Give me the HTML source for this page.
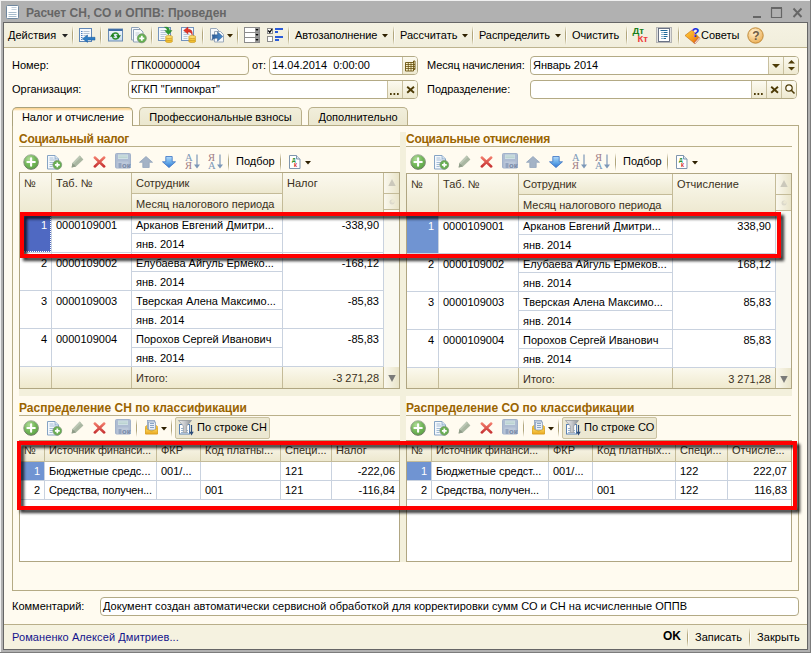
<!DOCTYPE html>
<html><head><meta charset="utf-8"><style>
*{box-sizing:border-box;margin:0;padding:0}
html,body{width:811px;height:653px;overflow:hidden}
body{font-family:"Liberation Sans",sans-serif;font-size:11px;color:#000;background:#b1b1b1;position:relative}
.abs{position:absolute}
.t{position:absolute;white-space:nowrap;line-height:13px;height:13px}
#win{position:absolute;left:4px;top:23px;width:803px;height:626px;background:#fffbf0}
#frameL{position:absolute;left:3px;top:22px;width:1px;height:628px;background:#666}
#frameR{position:absolute;left:807px;top:22px;width:1px;height:628px;background:#666}
#frameT{position:absolute;left:3px;top:22px;width:805px;height:1px;background:#666}
#frameB{position:absolute;left:3px;top:649px;width:805px;height:1px;background:#666}
#title{position:absolute;left:26px;top:6px;font-size:12px;font-weight:bold;color:#666;line-height:15px;white-space:nowrap}
#tb{position:absolute;left:4px;top:23px;width:803px;height:25px;background:linear-gradient(#f5f2e2,#f1eedc);border-bottom:1px solid #bdb38e}
.sep{position:absolute;width:2px;background:linear-gradient(rgba(178,166,124,0),rgba(178,166,124,1) 35%,rgba(178,166,124,1) 65%,rgba(178,166,124,0)) left/1px 100% no-repeat,linear-gradient(rgba(255,255,255,0),rgba(255,255,255,.9) 35%,rgba(255,255,255,.9) 65%,rgba(255,255,255,0)) right/1px 100% no-repeat}
.fld{position:absolute;height:19px;border:1px solid #b3aa85;border-radius:4px;background:#fff;overflow:hidden}
.fld .tx{position:absolute;left:2px;top:2px;line-height:13px;white-space:nowrap}
.btn{position:absolute;top:0;height:17px;width:15px;border-left:1px solid #c9c09f;background:linear-gradient(#fcfaf0,#eee9d0)}
.tab{position:absolute;top:107px;height:18px;border:1px solid #b9af8a;border-bottom:none;border-radius:5px 5px 0 0;background:linear-gradient(#f1eedb,#ebe7cf);text-align:center;line-height:18px;white-space:nowrap}
.tab.act{background:linear-gradient(#fbd596 0,#fbd596 1px,#fde9c4 2px,#fffbf0 3px);height:19px;line-height:18px;border-color:#aaa27c}
#panel{position:absolute;left:12px;top:125px;width:787px;height:466px;border:1px solid #b5ab85;background:#fffbf0}
.sect{position:absolute;font-size:12px;font-weight:bold;color:#9a6400;line-height:15px;white-space:nowrap}
.sline{position:absolute;height:1px;background:#bab08a}
.grid{position:absolute;border:1px solid #b0a682;background:#fff;overflow:hidden}
.hd{position:absolute;background:linear-gradient(#fbf9ee,#ede8cf);border-right:1px solid #c4bb98;border-bottom:1px solid #c4bb98;color:#3a3020}
.hd span,.c span{position:absolute;left:4px;top:3px;line-height:13px;white-space:nowrap}
.c{position:absolute;border-right:1px solid #c9d2df;border-bottom:1px solid #c9d2df;background:#fff;overflow:hidden}
.c.r span{left:auto;right:4px}
.ft{position:absolute;background:linear-gradient(#fbf9ee,#efe9cd);border-right:1px solid #c4bb98;color:#3a3020}
.g1 .hd span,.g1 .c span{top:4px}
.ft span{position:absolute;top:5px;line-height:13px;white-space:nowrap}
.sb{position:absolute;background:#faf9f2;}
.red{position:absolute;border:4px solid #ff0000;filter:drop-shadow(3px 3px 1.5px rgba(0,0,0,.8))}
</style></head><body>
<!-- title bar -->
<div class="abs" style="left:0;top:0;width:811px;height:1px;background:#f0f0f0"></div>
<div class="abs" style="left:0;top:0;width:1px;height:653px;background:#f0f0f0"></div>
<svg class="abs" style="left:6px;top:5px" width="13" height="14" viewBox="0 0 13 14"><rect x=".5" y=".5" width="12" height="13" rx="1" fill="#fff" stroke="#7088a0"/><path d="M5.500 2.500h5M5.500 4.500h5" stroke="#c4d0dc" stroke-width="1"/><path d="M2.500 7.500h8M2.500 9.500h8M2.500 11.500h8" stroke="#a8bccc" stroke-width="1"/></svg>
<div id="title">Расчет СН, СО и ОППВ: Проведен</div>
<svg class="abs" style="left:750px;top:4px" width="56" height="16" viewBox="0 0 56 16"><path d="M3 13h8" stroke="#666" stroke-width="2"/><path d="M21.500 4v9.500h10v-9.500" fill="none" stroke="#666" stroke-width="1.200"/><path d="M21 4h11" stroke="#666" stroke-width="2"/><path d="M43.500 4.500l8 8.500M51.500 4.500l-8 8.500" stroke="#666" stroke-width="1.900"/></svg>
<div class="abs" style="left:810px;top:0;width:1px;height:653px;background:#7c7c7c"></div><div class="abs" style="left:0;top:652px;width:811px;height:1px;background:#7c7c7c"></div>
<div id="win"></div>
<div id="frameL"></div><div id="frameR"></div><div id="frameT"></div><div id="frameB"></div>
<div id="tb"></div>

<!-- toolbar items -->
<div class="t" style="left:8px;top:29px">Действия</div>
<svg class="abs" style="left:62px;top:34px" width="6" height="4"><path d="M0 0h6l-3 3.5z" fill="#222"/></svg>
<div class="sep" style="left:72px;top:26px;height:19px"></div>
<!-- icon1 -->
<svg class="abs" style="left:79px;top:27px" width="17" height="17" viewBox="0 0 17 17"><rect x=".5" y="1.500" width="12" height="13" fill="#f6f9fc" stroke="#5f86b6"/><path d="M2 4.500h1.500M2 6.500h1.500M2 8.500h1.500M2 10.500h1.500M2 12.500h1.500" stroke="#4a7cc0"/><path d="M4.500 4.500h6M4.500 6.500h6M4.500 8.500h4M4.500 12.500h6" stroke="#b4c2d2"/><path d="M16 10.300h-7.500v-2.300l-5 3.700 5 3.700v-2.300h7.500z" fill="#2d7cc4" stroke="#1d5c9a" stroke-width=".5"/></svg>
<div class="sep" style="left:100px;top:26px;height:19px"></div>
<!-- icon2 -->
<svg class="abs" style="left:108px;top:28px" width="15" height="14" viewBox="0 0 15 14"><defs><linearGradient id="gw" x1="0" y1="0" x2="0" y2="1"><stop offset="0" stop-color="#f4f8fc"/><stop offset="1" stop-color="#c8dcf0"/></linearGradient></defs><rect x=".5" y="1" width="14" height="12" fill="url(#gw)" stroke="#6a8cb4"/><rect x=".5" y="1" width="14" height="2" fill="#3f6ea6"/><circle cx="7.500" cy="8" r="3" fill="none" stroke="#2f8f2f" stroke-width="1.300"/><path d="M2 8.800h5l-2.500-3.600z" fill="#1f7f1f"/><path d="M8 7.200h5l-2.500 3.600z" fill="#1f7f1f"/></svg>
<!-- icon3 -->
<svg class="abs" style="left:130px;top:26px" width="18" height="18" viewBox="0 0 18 18"><path d="M1.500 1.500h7l2.500 2.500v10h-9.500z" fill="#f4f7fa" stroke="#8fa2b8"/><path d="M3.500 3.500h7l2.500 2.500v10h-9.500z" fill="#f8fafc" stroke="#8fa2b8"/><path d="M5.500 7h4M5.500 9h3" stroke="#c0ccd8"/><circle cx="11.800" cy="12.300" r="4.500" fill="#62b04e" stroke="#7c9474" stroke-width=".8"/><path d="M11.800 9.800v5M9.300 12.300h5" stroke="#fff" stroke-width="1.800"/></svg>
<div class="sep" style="left:151px;top:26px;height:19px"></div>
<!-- icon4 -->
<svg class="abs" style="left:157px;top:26px" width="18" height="18" viewBox="0 0 18 18"><rect x="1.500" y="1.500" width="12" height="13" fill="#f4f8fc" stroke="#7393bd"/><path d="M3.500 4.500h5M3.500 6.500h6M3.500 8.500h6M3.500 10.500h4M3.500 12.500h4" stroke="#b7c6d8"/><path d="M7.500 1.200c3-.6 5 .5 5 3.300h2.500l-3.600 4.300-3.600-4.300h2.400c0-1.500-1-2.400-2.700-3.300z" fill="#2f9a32" stroke="#1f7a22" stroke-width=".4"/><ellipse cx="12" cy="15" rx="3.600" ry="1.600" fill="#f2c030" stroke="#c4921c" stroke-width=".6"/><ellipse cx="12" cy="13" rx="3.600" ry="1.600" fill="#f6cc44" stroke="#c4921c" stroke-width=".6"/><ellipse cx="12" cy="11" rx="3.600" ry="1.600" fill="#fbdc68" stroke="#c4921c" stroke-width=".6"/></svg>
<!-- icon5 -->
<svg class="abs" style="left:180px;top:26px" width="18" height="18" viewBox="0 0 18 18"><rect x="1.500" y="1.500" width="12" height="13" fill="#f4f8fc" stroke="#7393bd"/><path d="M3.500 6.500h3M3.500 8.500h6M3.500 10.500h4M3.500 12.500h4M9 4.500h3" stroke="#b7c6d8"/><path d="M3.600 4.500l4.400-3.500v2.200c3 0 4.800 1.800 4.200 6-.7-2.400-1.800-3.300-4.200-3.300v2.200z" fill="#e23428" stroke="#b01c14" stroke-width=".4"/><ellipse cx="12.2" cy="15" rx="3.600" ry="1.600" fill="#f2c030" stroke="#c4921c" stroke-width=".6"/><ellipse cx="12.2" cy="13" rx="3.600" ry="1.600" fill="#f6cc44" stroke="#c4921c" stroke-width=".6"/><ellipse cx="12.2" cy="11" rx="3.600" ry="1.600" fill="#fbdc68" stroke="#c4921c" stroke-width=".6"/></svg>
<div class="sep" style="left:202px;top:26px;height:19px"></div>
<!-- icon6 -->
<svg class="abs" style="left:209px;top:27px" width="17" height="17" viewBox="0 0 17 17"><defs><linearGradient id="g6" x1="0" y1="0" x2="1" y2="0"><stop offset="0" stop-color="#2c5a96"/><stop offset="1" stop-color="#4a8ed0"/></linearGradient></defs><path d="M1.500 1.500h6l2.500 2.500v9h-8.500z" fill="#f6f8fa" stroke="#9aa9ba"/><path d="M5.500 4.500h6l3 3v7.500h-9z" fill="#f6f8fa" stroke="#9aa9ba"/><path d="M3 7.800h5.500v-3l5.300 4.700-5.300 4.700v-3c-2.500 0-4 .3-5.500 1.600 .6-2 .6-3.500 0-5z" fill="url(#g6)" stroke="#244c82" stroke-width=".4"/></svg>
<svg class="abs" style="left:227px;top:34px" width="6" height="4"><path d="M0 0h6l-3 3.500z" fill="#3a2800"/></svg>
<div class="sep" style="left:237px;top:26px;height:19px"></div>
<!-- icon7 -->
<svg class="abs" style="left:244px;top:27px" width="16" height="16" viewBox="0 0 16 16"><rect x=".5" y="0.500" width="15" height="5" fill="#fff" stroke="#8c8c8c"/><rect x="11" y="1" width="4" height="4" fill="#9a9a9a"/><path d="M11.500 2h3l-1.500 2z" fill="#000"/><rect x=".5" y="5.500" width="15" height="5" fill="#fff" stroke="#8c8c8c"/><rect x="11" y="6" width="4" height="4" fill="#9a9a9a"/><path d="M11.500 7h3l-1.500 2z" fill="#000"/><rect x=".5" y="10.500" width="15" height="5" fill="#fff" stroke="#8c8c8c"/><rect x="11" y="11" width="4" height="4" fill="#9a9a9a"/><path d="M11.500 12h3l-1.500 2z" fill="#000"/></svg>
<!-- icon8 -->
<svg class="abs" style="left:267px;top:28px" width="17" height="14" viewBox="0 0 17 14"><rect x=".5" y=".5" width="5" height="5" fill="#fff" stroke="#8c8c8c"/><path d="M1.300 2.500l1.500 1.800 2.200-3.300" stroke="#000" stroke-width="1.300" fill="none"/><rect x=".5" y="8.500" width="5" height="5" fill="#fff" stroke="#8c8c8c"/><path d="M8 1h8M8 4h3M8 9h8M8 12h4" stroke="#2a5ad8" stroke-width="1.800"/></svg>
<div class="sep" style="left:288px;top:26px;height:19px"></div>
<div class="t" style="left:295px;top:29px;letter-spacing:-.1px">Автозаполнение</div>
<svg class="abs" style="left:382px;top:34px" width="6" height="4"><path d="M0 0h6l-3 3.500z" fill="#2e2000"/></svg>
<div class="sep" style="left:393px;top:26px;height:19px"></div>
<div class="t" style="left:400px;top:29px">Рассчитать</div>
<svg class="abs" style="left:462px;top:34px" width="6" height="4"><path d="M0 0h6l-3 3.500z" fill="#2e2000"/></svg>
<div class="sep" style="left:472px;top:26px;height:19px"></div>
<div class="t" style="left:479px;top:29px;letter-spacing:-.1px">Распределить</div>
<svg class="abs" style="left:555px;top:34px" width="6" height="4"><path d="M0 0h6l-3 3.500z" fill="#2e2000"/></svg>
<div class="sep" style="left:565px;top:26px;height:19px"></div>
<div class="t" style="left:572px;top:29px;letter-spacing:-.1px">Очистить</div>
<div class="sep" style="left:626px;top:26px;height:19px"></div>
<!-- DtKt -->
<svg class="abs" style="left:631px;top:26px" width="19" height="18" viewBox="0 0 19 18"><text x="1.500" y="8" font-family="Liberation Sans" font-weight="bold" font-size="9" fill="#1a7e1a" textLength="11.500" lengthAdjust="spacingAndGlyphs">Дт</text><text x="6.500" y="15.700" font-family="Liberation Sans" font-weight="bold" font-size="9" fill="#ee3a3a" textLength="10.500" lengthAdjust="spacingAndGlyphs">Кт</text></svg>
<!-- list icon -->
<svg class="abs" style="left:656px;top:27px" width="16" height="16" viewBox="0 0 16 16"><rect x=".5" y=".5" width="15" height="15" fill="#e2e2e2" stroke="#b4b4b4"/><rect x="2.500" y="1.500" width="11" height="13" fill="#fff" stroke="#5c667a" stroke-width=".9"/><path d="M4.500 3.500h7M7.500 5.500h4M7.500 7.500h4M7.500 9.500h4M7.500 11.500h2.500M4.500 13h0" stroke="#1f6a9a"/><path d="M5.500 5.500h1M5.500 7.500h1M5.500 9.500h1M5.500 11.500h1" stroke="#1f6a9a"/></svg>
<div class="sep" style="left:678px;top:26px;height:19px"></div>
<!-- sovety icon -->
<svg class="abs" style="left:684px;top:25px" width="18" height="20" viewBox="0 0 18 20"><defs><linearGradient id="gb" x1="0" y1="0" x2="1" y2="1"><stop offset="0" stop-color="#ffd23c"/><stop offset=".6" stop-color="#f59a1c"/><stop offset="1" stop-color="#e05a14"/></linearGradient></defs><path d="M1 10.500l7-5.500 7 7.500-5 5.500z" fill="url(#gb)" stroke="#c06a10" stroke-width=".6"/><path d="M10 18l5-5.500 .8 1-5 5.500z" fill="#fff" stroke="#b8421c" stroke-width=".6"/><text x="7.500" y="11.500" font-family="Liberation Sans" font-weight="bold" font-size="13" fill="#1a2ee0">?</text></svg>
<div class="t" style="left:701px;top:29px">Советы</div>
<!-- help -->
<svg class="abs" style="left:747px;top:27px" width="17" height="17" viewBox="0 0 17 17"><defs><radialGradient id="hg" cx=".4" cy=".3" r=".8"><stop offset="0" stop-color="#fff2d2"/><stop offset="1" stop-color="#eaa848"/></radialGradient></defs><circle cx="8.500" cy="8.500" r="7.700" fill="url(#hg)" stroke="#c08a3a"/><text x="5.300" y="13" font-family="Liberation Sans" font-weight="bold" font-size="12" fill="#6e5c46">?</text></svg>

<!-- fields row 1 -->
<div class="t" style="left:12px;top:59px">Номер:</div>
<div class="fld" style="left:128px;top:56px;width:121px;background:#fffbf0"><div class="tx">ГПК00000004</div></div>
<div class="t" style="left:252px;top:59px">от:</div>
<div class="fld" style="left:269px;top:56px;width:149px"><div class="tx">14.04.2014&nbsp; 0:00:00</div>
 <div class="btn" style="left:132px"><svg class="abs" style="left:2px;top:3px" width="11" height="12" viewBox="0 0 11 12"><path d="M.5 2.500h8v-1.500h1.500v8.500h-1.500v1.500h-8z" fill="#fbf3cc" stroke="#6a5210" stroke-width=".9"/><path d="M.5 4.500h9.500M.5 6.500h9.500M.5 8.500h9.500M3.300 2.500v8.500M6 2.500v8.500M8.500 1.500v9" stroke="#6a5210" stroke-width=".8"/></svg></div></div>
<div class="t" style="left:427px;top:59px;letter-spacing:-.1px">Месяц начисления:</div>
<div class="fld" style="left:530px;top:56px;width:269px"><div class="tx">Январь 2014</div>
 <div class="btn" style="left:237px"><svg class="abs" style="left:3px;top:7px" width="8" height="4"><path d="M0 0h8l-4 4z" fill="#4e3c08"/></svg></div>
 <div class="btn" style="left:252px"><svg class="abs" style="left:4px;top:3px" width="7" height="11"><path d="M0 3.500h7l-3.500-3.500z" fill="#4e3c08"/><path d="M0 7h7l-3.500 3.500z" fill="#4e3c08"/></svg></div></div>
<!-- fields row 2 -->
<div class="t" style="left:12px;top:83px">Организация:</div>
<div class="fld" style="left:128px;top:80px;width:290px"><div class="tx">КГКП "Гиппократ"</div>
 <div class="btn" style="left:258px"><svg class="abs" style="left:2px;top:12px" width="10" height="2"><rect x="0" y="0" width="1.700" height="2" fill="#4e3c08"/><rect x="3.500" y="0" width="1.700" height="2" fill="#4e3c08"/><rect x="7" y="0" width="1.700" height="2" fill="#4e3c08"/></svg></div>
 <div class="btn" style="left:273px"><svg class="abs" style="left:3px;top:4px" width="9" height="9"><path d="M1.200 1.700l6.800 6M8 1.700l-6.800 6" stroke="#4e3c08" stroke-width="1.900"/></svg></div></div>
<div class="t" style="left:427px;top:83px">Подразделение:</div>
<div class="fld" style="left:530px;top:80px;width:267px"><div class="tx"></div>
 <div class="btn" style="left:220px"><svg class="abs" style="left:2px;top:12px" width="10" height="2"><rect x="0" y="0" width="1.700" height="2" fill="#4e3c08"/><rect x="3.500" y="0" width="1.700" height="2" fill="#4e3c08"/><rect x="7" y="0" width="1.700" height="2" fill="#4e3c08"/></svg></div>
 <div class="btn" style="left:235px"><svg class="abs" style="left:3px;top:4px" width="9" height="9"><path d="M1.200 1.700l6.800 6M8 1.700l-6.800 6" stroke="#4e3c08" stroke-width="1.900"/></svg></div>
 <div class="btn" style="left:250px"><svg class="abs" style="left:2px;top:2px" width="12" height="12"><circle cx="5" cy="5" r="3.200" fill="#fffdf2" stroke="#4e3c08" stroke-width="1.200"/><path d="M7.300 7.300l3.200 3.200" stroke="#4e3c08" stroke-width="1.600"/></svg></div></div>
<!-- tabs -->
<div id="panel"></div>
<div class="tab act" style="left:12px;width:121px;text-indent:1px">Налог и отчисление</div>
<div class="tab" style="left:139px;width:163px">Профессиональные взносы</div>
<div class="tab" style="left:308px;width:100px">Дополнительно</div>

<!--GEN-->
<div class="abs" style="left:400px;top:132px;width:6px;height:430px;background:#f3f0dc"></div>
<div class="abs" style="left:19px;top:389px;width:773px;height:7px;background:#f3f0dc"></div>
<div class="sect" style="left:19px;top:132px;letter-spacing:-.27px">Социальный налог</div>
<div class="sline" style="left:19px;top:146px;width:381px"></div>
<div class="sect" style="left:406px;top:132px;letter-spacing:-.27px">Социальные отчисления</div>
<div class="sline" style="left:406px;top:146px;width:386px"></div>
<svg class="abs" style="left:23px;top:154px" width="16" height="16" viewBox="0 0 16 16"><defs><radialGradient id="ga" cx=".38" cy=".3" r=".75"><stop offset="0" stop-color="#b2dd9a"/><stop offset=".55" stop-color="#74b75a"/><stop offset="1" stop-color="#5aa242"/></radialGradient><linearGradient id="gs" x1="0" y1="0" x2="0" y2="1"><stop offset="0" stop-color="#aab4a2"/><stop offset="1" stop-color="#66745e"/></linearGradient></defs><circle cx="8.100" cy="8" r="7.300" fill="url(#ga)" stroke="url(#gs)" stroke-width="1"/><path d="M8.100 4.300v7.400M4.400 8h7.400" stroke="#fff" stroke-width="2.100" stroke-linecap="round"/></svg>
<svg class="abs" style="left:47px;top:155px" width="16" height="15" viewBox="0 0 16 15"><path d="M.5 .5h7.500l3.500 3.500v10h-11z" fill="#f4f8fc" stroke="#86a4c4"/><path d="M8 .5v3.500h3.500" fill="#d4e2f0" stroke="#86a4c4" stroke-width=".8"/><path d="M2.500 3h4M2.500 5h6M2.500 7.500h5M2.500 9.500h4M2.500 11.500h3" stroke="#a4bcd6"/><circle cx="10.300" cy="9.800" r="4.400" fill="#66ae50" stroke="#7e9878" stroke-width=".8"/><path d="M10.300 7.400v4.800M7.900 9.800h4.800" stroke="#fff" stroke-width="1.700"/></svg>
<svg class="abs" style="left:71px;top:155px" width="13" height="13" viewBox="0 0 13 13"><path d="M.6 12.400l.9-4.400 7.300-7.400 3.600 3.800-7.400 7.200z" fill="#aab7a2"/><path d="M.6 12.400l.9-4.400 3.500 3.600z" fill="#8f9c88"/><path d="M1.500 8l7.300-7.400 1.200 1.300-7.300 7.300z" fill="#bcc8b5"/></svg>
<svg class="abs" style="left:93px;top:156px" width="13" height="12" viewBox="0 0 13 12"><defs><linearGradient id="gx" x1="0" y1="0" x2="0" y2="1"><stop offset="0" stop-color="#f07868"/><stop offset="1" stop-color="#c83434"/></linearGradient></defs><path d="M1.800 1.500l9.400 9M11.200 1.500l-9.400 9" stroke="url(#gx)" stroke-width="2.500" stroke-linecap="round"/></svg>
<svg class="abs" style="left:115px;top:153px" width="16" height="16" viewBox="0 0 16 16"><rect x=".5" y=".5" width="15" height="14.500" rx="1" fill="#aebcd2" stroke="#a2b2ca"/><rect x="3" y="1.500" width="10" height="4.500" fill="#cfe0e4"/><path d="M3.500 3h9M3.500 4.500h9" stroke="#b8d0cc" stroke-width=".8"/><rect x="2.500" y="8.500" width="11" height="6.500" fill="#bcc8da"/><rect x="3.500" y="10" width="3" height="5" fill="#93a4c0"/><text x="7" y="15" font-family="Liberation Sans" font-weight="bold" font-size="7" fill="#7888a6" textLength="8.500" lengthAdjust="spacingAndGlyphs">ок</text></svg>
<svg class="abs" style="left:139px;top:156px" width="14" height="12" viewBox="0 0 14 12"><path d="M7 .5l6.500 5.800h-3.300v5.200h-6.400v-5.200h-3.300z" fill="#a4b3c6" stroke="#94a6bc" stroke-width=".8"/></svg>
<svg class="abs" style="left:162px;top:156px" width="14" height="12" viewBox="0 0 14 12"><defs><linearGradient id="gd" x1="0" y1="0" x2="0" y2="1"><stop offset="0" stop-color="#b4dafa"/><stop offset=".5" stop-color="#6aaeea"/><stop offset="1" stop-color="#2f74d0"/></linearGradient></defs><path d="M7 11.600l6.500-5.800h-3.300v-5.300h-6.400v5.300h-3.300z" fill="url(#gd)" stroke="#3a72c4" stroke-width=".8"/></svg>
<svg class="abs" style="left:185px;top:153px" width="16" height="17" viewBox="0 0 16 17"><text x="0" y="8" font-family="Liberation Serif" font-size="10.500" fill="#7c98b8">А</text><text x="0" y="16.300" font-family="Liberation Serif" font-size="10.500" fill="#a07c84">Я</text><path d="M12 1.500v12.500" stroke="#7c98b8" stroke-width="1.200" fill="none"/><path d="M9 11.500h6l-3 4z" fill="#7c98b8"/></svg>
<svg class="abs" style="left:208px;top:153px" width="16" height="17" viewBox="0 0 16 17"><text x="0" y="8" font-family="Liberation Serif" font-size="10.500" fill="#a07c84">Я</text><text x="0" y="16.300" font-family="Liberation Serif" font-size="10.500" fill="#7c98b8">А</text><path d="M12 1.500v12.500" stroke="#7c98b8" stroke-width="1.200" fill="none"/><path d="M9 11.500h6l-3 4z" fill="#7c98b8"/></svg>
<div class="sep" style="left:228px;top:153px;height:18px"></div>
<div class="t" style="left:236px;top:155px">Подбор</div>
<div class="sep" style="left:280px;top:153px;height:18px"></div>
<svg class="abs" style="left:289px;top:155px" width="12" height="14" viewBox="0 0 12 14"><path d="M.5 .5h7l3.500 3.500v9.500h-10.500z" fill="#fff" stroke="#7f95ad"/><path d="M7.500 .5v3.500h3.500" fill="#dfe7f0" stroke="#7f95ad"/><text x="3" y="6.500" font-family="Liberation Sans" font-weight="bold" font-size="5" fill="#1a8a1a">Д</text><text x="5" y="11.500" font-family="Liberation Sans" font-weight="bold" font-size="5" fill="#d02020">К</text></svg>
<svg class="abs" style="left:305px;top:161px" width="6" height="4"><path d="M0 0h6l-3 3.500z" fill="#2e2000"/></svg>
<svg class="abs" style="left:410px;top:154px" width="16" height="16" viewBox="0 0 16 16"><defs><radialGradient id="ga" cx=".38" cy=".3" r=".75"><stop offset="0" stop-color="#b2dd9a"/><stop offset=".55" stop-color="#74b75a"/><stop offset="1" stop-color="#5aa242"/></radialGradient><linearGradient id="gs" x1="0" y1="0" x2="0" y2="1"><stop offset="0" stop-color="#aab4a2"/><stop offset="1" stop-color="#66745e"/></linearGradient></defs><circle cx="8.100" cy="8" r="7.300" fill="url(#ga)" stroke="url(#gs)" stroke-width="1"/><path d="M8.100 4.300v7.400M4.400 8h7.400" stroke="#fff" stroke-width="2.100" stroke-linecap="round"/></svg>
<svg class="abs" style="left:434px;top:155px" width="16" height="15" viewBox="0 0 16 15"><path d="M.5 .5h7.500l3.500 3.500v10h-11z" fill="#f4f8fc" stroke="#86a4c4"/><path d="M8 .5v3.500h3.500" fill="#d4e2f0" stroke="#86a4c4" stroke-width=".8"/><path d="M2.500 3h4M2.500 5h6M2.500 7.500h5M2.500 9.500h4M2.500 11.500h3" stroke="#a4bcd6"/><circle cx="10.300" cy="9.800" r="4.400" fill="#66ae50" stroke="#7e9878" stroke-width=".8"/><path d="M10.300 7.400v4.800M7.900 9.800h4.800" stroke="#fff" stroke-width="1.700"/></svg>
<svg class="abs" style="left:458px;top:155px" width="13" height="13" viewBox="0 0 13 13"><path d="M.6 12.400l.9-4.400 7.300-7.400 3.600 3.800-7.400 7.200z" fill="#aab7a2"/><path d="M.6 12.400l.9-4.400 3.500 3.600z" fill="#8f9c88"/><path d="M1.500 8l7.300-7.400 1.200 1.300-7.300 7.300z" fill="#bcc8b5"/></svg>
<svg class="abs" style="left:480px;top:156px" width="13" height="12" viewBox="0 0 13 12"><defs><linearGradient id="gx" x1="0" y1="0" x2="0" y2="1"><stop offset="0" stop-color="#f07868"/><stop offset="1" stop-color="#c83434"/></linearGradient></defs><path d="M1.800 1.500l9.400 9M11.200 1.500l-9.400 9" stroke="url(#gx)" stroke-width="2.500" stroke-linecap="round"/></svg>
<svg class="abs" style="left:502px;top:153px" width="16" height="16" viewBox="0 0 16 16"><rect x=".5" y=".5" width="15" height="14.500" rx="1" fill="#aebcd2" stroke="#a2b2ca"/><rect x="3" y="1.500" width="10" height="4.500" fill="#cfe0e4"/><path d="M3.500 3h9M3.500 4.500h9" stroke="#b8d0cc" stroke-width=".8"/><rect x="2.500" y="8.500" width="11" height="6.500" fill="#bcc8da"/><rect x="3.500" y="10" width="3" height="5" fill="#93a4c0"/><text x="7" y="15" font-family="Liberation Sans" font-weight="bold" font-size="7" fill="#7888a6" textLength="8.500" lengthAdjust="spacingAndGlyphs">ок</text></svg>
<svg class="abs" style="left:526px;top:156px" width="14" height="12" viewBox="0 0 14 12"><path d="M7 .5l6.500 5.800h-3.300v5.200h-6.400v-5.200h-3.300z" fill="#a4b3c6" stroke="#94a6bc" stroke-width=".8"/></svg>
<svg class="abs" style="left:549px;top:156px" width="14" height="12" viewBox="0 0 14 12"><defs><linearGradient id="gd" x1="0" y1="0" x2="0" y2="1"><stop offset="0" stop-color="#b4dafa"/><stop offset=".5" stop-color="#6aaeea"/><stop offset="1" stop-color="#2f74d0"/></linearGradient></defs><path d="M7 11.600l6.500-5.800h-3.300v-5.300h-6.400v5.300h-3.300z" fill="url(#gd)" stroke="#3a72c4" stroke-width=".8"/></svg>
<svg class="abs" style="left:572px;top:153px" width="16" height="17" viewBox="0 0 16 17"><text x="0" y="8" font-family="Liberation Serif" font-size="10.500" fill="#7c98b8">А</text><text x="0" y="16.300" font-family="Liberation Serif" font-size="10.500" fill="#a07c84">Я</text><path d="M12 1.500v12.500" stroke="#7c98b8" stroke-width="1.200" fill="none"/><path d="M9 11.500h6l-3 4z" fill="#7c98b8"/></svg>
<svg class="abs" style="left:595px;top:153px" width="16" height="17" viewBox="0 0 16 17"><text x="0" y="8" font-family="Liberation Serif" font-size="10.500" fill="#a07c84">Я</text><text x="0" y="16.300" font-family="Liberation Serif" font-size="10.500" fill="#7c98b8">А</text><path d="M12 1.500v12.500" stroke="#7c98b8" stroke-width="1.200" fill="none"/><path d="M9 11.500h6l-3 4z" fill="#7c98b8"/></svg>
<div class="sep" style="left:615px;top:153px;height:18px"></div>
<div class="t" style="left:623px;top:155px">Подбор</div>
<div class="sep" style="left:667px;top:153px;height:18px"></div>
<svg class="abs" style="left:676px;top:155px" width="12" height="14" viewBox="0 0 12 14"><path d="M.5 .5h7l3.500 3.500v9.500h-10.500z" fill="#fff" stroke="#7f95ad"/><path d="M7.500 .5v3.500h3.500" fill="#dfe7f0" stroke="#7f95ad"/><text x="3" y="6.500" font-family="Liberation Sans" font-weight="bold" font-size="5" fill="#1a8a1a">Д</text><text x="5" y="11.500" font-family="Liberation Sans" font-weight="bold" font-size="5" fill="#d02020">К</text></svg>
<svg class="abs" style="left:692px;top:161px" width="6" height="4"><path d="M0 0h6l-3 3.500z" fill="#2e2000"/></svg>
<div class="grid g1" style="left:19px;top:172px;width:381px;height:217px">
<div class="hd" style="left:0px;top:0px;width:32px;height:42px;"><span>№</span></div>
<div class="hd" style="left:32px;top:0px;width:80px;height:42px;"><span>Таб. №</span></div>
<div class="hd" style="left:112px;top:0px;width:151px;height:21px;"><span>Сотрудник</span></div>
<div class="hd" style="left:112px;top:21px;width:151px;height:21px;"><span>Месяц налогового периода</span></div>
<div class="hd" style="left:263px;top:0px;width:101px;height:42px;"><span>Налог</span></div>
<div class="c r" style="left:0px;top:42px;width:32px;height:38px;background:#4f69c2;color:#fff;"><span>1</span><div class="abs" style="left:0;top:0;right:0;bottom:0;border:1px dotted #fff"></div></div>
<div class="c" style="left:32px;top:42px;width:80px;height:38px;"><span>0000109001</span></div>
<div class="c" style="left:112px;top:42px;width:151px;height:19px;"><span>Арканов Евгений Дмитри...</span></div>
<div class="c" style="left:112px;top:61px;width:151px;height:19px;"><span>янв. 2014</span></div>
<div class="c r" style="left:263px;top:42px;width:101px;height:38px;"><span>-338,90</span></div>
<div class="c r" style="left:0px;top:80px;width:32px;height:38px;"><span>2</span></div>
<div class="c" style="left:32px;top:80px;width:80px;height:38px;"><span>0000109002</span></div>
<div class="c" style="left:112px;top:80px;width:151px;height:19px;"><span>Елубаева Айгуль Ермеко...</span></div>
<div class="c" style="left:112px;top:99px;width:151px;height:19px;"><span>янв. 2014</span></div>
<div class="c r" style="left:263px;top:80px;width:101px;height:38px;"><span>-168,12</span></div>
<div class="c r" style="left:0px;top:118px;width:32px;height:38px;"><span>3</span></div>
<div class="c" style="left:32px;top:118px;width:80px;height:38px;"><span>0000109003</span></div>
<div class="c" style="left:112px;top:118px;width:151px;height:19px;"><span>Тверская Алена Максимо...</span></div>
<div class="c" style="left:112px;top:137px;width:151px;height:19px;"><span>янв. 2014</span></div>
<div class="c r" style="left:263px;top:118px;width:101px;height:38px;"><span>-85,83</span></div>
<div class="c r" style="left:0px;top:156px;width:32px;height:38px;"><span>4</span></div>
<div class="c" style="left:32px;top:156px;width:80px;height:38px;"><span>0000109004</span></div>
<div class="c" style="left:112px;top:156px;width:151px;height:19px;"><span>Порохов Сергей Иванович</span></div>
<div class="c" style="left:112px;top:175px;width:151px;height:19px;"><span>янв. 2014</span></div>
<div class="c r" style="left:263px;top:156px;width:101px;height:38px;"><span>-85,83</span></div>
<div class="ft" style="left:0px;top:194px;width:32px;height:21px;"></div>
<div class="ft" style="left:32px;top:194px;width:80px;height:21px;"></div>
<div class="ft" style="left:112px;top:194px;width:151px;height:21px;"><span style="left:4px">Итого:</span></div>
<div class="ft" style="left:263px;top:194px;width:101px;height:21px;"><span style="right:4px">-3 271,28</span></div>
<div class="sb" style="left:364px;top:0;width:15px;height:215px"></div>
<div class="hd" style="left:364px;top:0;width:15px;height:21px;border-right:none;background:linear-gradient(90deg,#faf8ee,#e9e4c9);"><svg class="abs" style="left:4px;top:6px" width="8" height="7"><path d="M.3 7h7.400l-3.700-7z" fill="#cbc8bb"/></svg></div>
<div class="hd" style="left:364px;top:21px;width:15px;height:16px;border-right:none;background:linear-gradient(90deg,#faf8ee,#e9e4c9);"><svg class="abs" style="left:5px;top:5px" width="6" height="6"><circle cx="3" cy="3" r="2.500" fill="#dcd9cb"/><circle cx="3.800" cy="2.200" r="1.500" fill="#ece8d2"/></svg></div>
<div class="ft" style="left:364px;top:194px;width:15px;height:21px;border-right:none;background:linear-gradient(90deg,#faf8ee,#e9e4c9);"><svg class="abs" style="left:4px;top:8px" width="8" height="7"><path d="M.3 0h7.400l-3.700 7z" fill="#7a7a78"/></svg></div>
</div>
<div class="grid g1" style="left:406px;top:173px;width:386px;height:216px">
<div class="hd" style="left:0px;top:0px;width:32px;height:42px;"><span>№</span></div>
<div class="hd" style="left:32px;top:0px;width:80px;height:42px;"><span>Таб. №</span></div>
<div class="hd" style="left:112px;top:0px;width:154px;height:21px;"><span>Сотрудник</span></div>
<div class="hd" style="left:112px;top:21px;width:154px;height:21px;"><span>Месяц налогового периода</span></div>
<div class="hd" style="left:266px;top:0px;width:103px;height:42px;"><span>Отчисление</span></div>
<div class="c r" style="left:0px;top:42px;width:32px;height:38px;background:#7094d2;color:#fff;"><span>1</span></div>
<div class="c" style="left:32px;top:42px;width:80px;height:38px;"><span>0000109001</span></div>
<div class="c" style="left:112px;top:42px;width:154px;height:19px;"><span>Арканов Евгений Дмитри...</span></div>
<div class="c" style="left:112px;top:61px;width:154px;height:19px;"><span>янв. 2014</span></div>
<div class="c r" style="left:266px;top:42px;width:103px;height:38px;"><span>338,90</span></div>
<div class="c r" style="left:0px;top:80px;width:32px;height:38px;"><span>2</span></div>
<div class="c" style="left:32px;top:80px;width:80px;height:38px;"><span>0000109002</span></div>
<div class="c" style="left:112px;top:80px;width:154px;height:19px;"><span>Елубаева Айгуль Ермеков...</span></div>
<div class="c" style="left:112px;top:99px;width:154px;height:19px;"><span>янв. 2014</span></div>
<div class="c r" style="left:266px;top:80px;width:103px;height:38px;"><span>168,12</span></div>
<div class="c r" style="left:0px;top:118px;width:32px;height:38px;"><span>3</span></div>
<div class="c" style="left:32px;top:118px;width:80px;height:38px;"><span>0000109003</span></div>
<div class="c" style="left:112px;top:118px;width:154px;height:19px;"><span>Тверская Алена Максимо...</span></div>
<div class="c" style="left:112px;top:137px;width:154px;height:19px;"><span>янв. 2014</span></div>
<div class="c r" style="left:266px;top:118px;width:103px;height:38px;"><span>85,83</span></div>
<div class="c r" style="left:0px;top:156px;width:32px;height:38px;"><span>4</span></div>
<div class="c" style="left:32px;top:156px;width:80px;height:38px;"><span>0000109004</span></div>
<div class="c" style="left:112px;top:156px;width:154px;height:19px;"><span>Порохов Сергей Иванович</span></div>
<div class="c" style="left:112px;top:175px;width:154px;height:19px;"><span>янв. 2014</span></div>
<div class="c r" style="left:266px;top:156px;width:103px;height:38px;"><span>85,83</span></div>
<div class="ft" style="left:0px;top:194px;width:32px;height:21px;"></div>
<div class="ft" style="left:32px;top:194px;width:80px;height:21px;"></div>
<div class="ft" style="left:112px;top:194px;width:154px;height:21px;"><span style="left:4px">Итого:</span></div>
<div class="ft" style="left:266px;top:194px;width:103px;height:21px;"><span style="right:4px">3 271,28</span></div>
<div class="sb" style="left:369px;top:0;width:15px;height:215px"></div>
<div class="hd" style="left:369px;top:0;width:15px;height:21px;border-right:none;background:linear-gradient(90deg,#faf8ee,#e9e4c9);"><svg class="abs" style="left:4px;top:6px" width="8" height="7"><path d="M.3 7h7.400l-3.700-7z" fill="#cbc8bb"/></svg></div>
<div class="hd" style="left:369px;top:21px;width:15px;height:16px;border-right:none;background:linear-gradient(90deg,#faf8ee,#e9e4c9);"><svg class="abs" style="left:5px;top:5px" width="6" height="6"><circle cx="3" cy="3" r="2.500" fill="#dcd9cb"/><circle cx="3.800" cy="2.200" r="1.500" fill="#ece8d2"/></svg></div>
<div class="ft" style="left:369px;top:194px;width:15px;height:21px;border-right:none;background:linear-gradient(90deg,#faf8ee,#e9e4c9);"><svg class="abs" style="left:4px;top:8px" width="8" height="7"><path d="M.3 0h7.400l-3.700 7z" fill="#7a7a78"/></svg></div>
</div>
<div class="sect" style="left:19px;top:401px">Распределение СН по классификации</div>
<div class="sline" style="left:19px;top:415px;width:381px"></div>
<div class="sect" style="left:406px;top:401px">Распределение СО по классификации</div>
<div class="sline" style="left:406px;top:415px;width:385px"></div>
<svg class="abs" style="left:23px;top:420px" width="16" height="16" viewBox="0 0 16 16"><defs><radialGradient id="ga" cx=".38" cy=".3" r=".75"><stop offset="0" stop-color="#b2dd9a"/><stop offset=".55" stop-color="#74b75a"/><stop offset="1" stop-color="#5aa242"/></radialGradient><linearGradient id="gs" x1="0" y1="0" x2="0" y2="1"><stop offset="0" stop-color="#aab4a2"/><stop offset="1" stop-color="#66745e"/></linearGradient></defs><circle cx="8.100" cy="8" r="7.300" fill="url(#ga)" stroke="url(#gs)" stroke-width="1"/><path d="M8.100 4.300v7.400M4.400 8h7.400" stroke="#fff" stroke-width="2.100" stroke-linecap="round"/></svg>
<svg class="abs" style="left:47px;top:421px" width="16" height="15" viewBox="0 0 16 15"><path d="M.5 .5h7.500l3.500 3.500v10h-11z" fill="#f4f8fc" stroke="#86a4c4"/><path d="M8 .5v3.500h3.500" fill="#d4e2f0" stroke="#86a4c4" stroke-width=".8"/><path d="M2.500 3h4M2.500 5h6M2.500 7.500h5M2.500 9.500h4M2.500 11.500h3" stroke="#a4bcd6"/><circle cx="10.300" cy="9.800" r="4.400" fill="#66ae50" stroke="#7e9878" stroke-width=".8"/><path d="M10.300 7.400v4.800M7.900 9.800h4.800" stroke="#fff" stroke-width="1.700"/></svg>
<svg class="abs" style="left:71px;top:421px" width="13" height="13" viewBox="0 0 13 13"><path d="M.6 12.400l.9-4.400 7.300-7.400 3.600 3.800-7.400 7.200z" fill="#aab7a2"/><path d="M.6 12.400l.9-4.400 3.500 3.600z" fill="#8f9c88"/><path d="M1.500 8l7.300-7.400 1.200 1.300-7.300 7.300z" fill="#bcc8b5"/></svg>
<svg class="abs" style="left:93px;top:422px" width="13" height="12" viewBox="0 0 13 12"><defs><linearGradient id="gx" x1="0" y1="0" x2="0" y2="1"><stop offset="0" stop-color="#f07868"/><stop offset="1" stop-color="#c83434"/></linearGradient></defs><path d="M1.800 1.500l9.400 9M11.200 1.500l-9.400 9" stroke="url(#gx)" stroke-width="2.500" stroke-linecap="round"/></svg>
<svg class="abs" style="left:115px;top:419px" width="16" height="16" viewBox="0 0 16 16"><rect x=".5" y=".5" width="15" height="14.500" rx="1" fill="#aebcd2" stroke="#a2b2ca"/><rect x="3" y="1.500" width="10" height="4.500" fill="#cfe0e4"/><path d="M3.500 3h9M3.500 4.500h9" stroke="#b8d0cc" stroke-width=".8"/><rect x="2.500" y="8.500" width="11" height="6.500" fill="#bcc8da"/><rect x="3.500" y="10" width="3" height="5" fill="#93a4c0"/><text x="7" y="15" font-family="Liberation Sans" font-weight="bold" font-size="7" fill="#7888a6" textLength="8.500" lengthAdjust="spacingAndGlyphs">ок</text></svg>
<div class="sep" style="left:136px;top:419px;height:18px"></div>
<svg class="abs" style="left:145px;top:420px" width="14" height="15" viewBox="0 0 14 15"><defs><linearGradient id="ge" x1="0" y1="0" x2="0" y2="1"><stop offset="0" stop-color="#fbd860"/><stop offset="1" stop-color="#eaa820"/></linearGradient></defs><path d="M.5 6.500l2-1.500h8l2 1.500v7.500h-12z" fill="#f4c030" stroke="#d49a1c" stroke-width=".6"/><rect x="2.500" y=".5" width="7" height="8" fill="#dce6f2" stroke="#8aa0be" stroke-width=".8"/><rect x="3.500" y="2" width="7" height="8" fill="#e8eef6" stroke="#8aa0be" stroke-width=".8"/><path d="M5 3.500h4M5 5.500h4M5 7.500h4" stroke="#7f9cc0" stroke-width=".9"/><path d="M.5 8.500l6 3 6-3v5.500h-12z" fill="url(#ge)" stroke="#d49a1c" stroke-width=".5"/></svg>
<svg class="abs" style="left:161px;top:427px" width="6" height="4"><path d="M0 0h6l-3 3.500z" fill="#2e2000"/></svg>
<div class="sep" style="left:171px;top:419px;height:18px"></div>
<div class="abs" style="left:175px;top:417px;width:95px;height:22px;border:1px solid #c9c1a0;background:#ece8d2;border-radius:2px"></div>
<svg class="abs" style="left:178px;top:420px" width="16" height="16" viewBox="0 0 16 16"><defs><linearGradient id="gf" x1="0" y1="0" x2="1" y2="0"><stop offset="0" stop-color="#f0f0f0"/><stop offset=".5" stop-color="#c4c6ca"/><stop offset="1" stop-color="#8a8e94"/></linearGradient></defs><rect x="1.500" y="4.500" width="10" height="9.500" fill="#fff" stroke="#5a82b4"/><path d="M3 8.500h2.500M3 10.500h2.500M3 12.500h2.500M8.500 10.500h1.500M8.500 12.500h1.500" stroke="#9ab4d0"/><path d="M.5 .5h13l-4.800 5.500v6.500h-3.400v-6.500z" fill="url(#gf)" stroke="#8a9098" stroke-width=".7"/><path d="M13.500 5v8" stroke="#2a4a78" stroke-width="1.200"/><path d="M11.300 11.800h4.400l-2.200 3.700z" fill="#2a4a78"/></svg>
<div class="t" style="left:197px;top:421px">По строке СН</div>
<svg class="abs" style="left:410px;top:420px" width="16" height="16" viewBox="0 0 16 16"><defs><radialGradient id="ga" cx=".38" cy=".3" r=".75"><stop offset="0" stop-color="#b2dd9a"/><stop offset=".55" stop-color="#74b75a"/><stop offset="1" stop-color="#5aa242"/></radialGradient><linearGradient id="gs" x1="0" y1="0" x2="0" y2="1"><stop offset="0" stop-color="#aab4a2"/><stop offset="1" stop-color="#66745e"/></linearGradient></defs><circle cx="8.100" cy="8" r="7.300" fill="url(#ga)" stroke="url(#gs)" stroke-width="1"/><path d="M8.100 4.300v7.400M4.400 8h7.400" stroke="#fff" stroke-width="2.100" stroke-linecap="round"/></svg>
<svg class="abs" style="left:434px;top:421px" width="16" height="15" viewBox="0 0 16 15"><path d="M.5 .5h7.500l3.500 3.500v10h-11z" fill="#f4f8fc" stroke="#86a4c4"/><path d="M8 .5v3.500h3.500" fill="#d4e2f0" stroke="#86a4c4" stroke-width=".8"/><path d="M2.500 3h4M2.500 5h6M2.500 7.500h5M2.500 9.500h4M2.500 11.500h3" stroke="#a4bcd6"/><circle cx="10.300" cy="9.800" r="4.400" fill="#66ae50" stroke="#7e9878" stroke-width=".8"/><path d="M10.300 7.400v4.800M7.900 9.800h4.800" stroke="#fff" stroke-width="1.700"/></svg>
<svg class="abs" style="left:458px;top:421px" width="13" height="13" viewBox="0 0 13 13"><path d="M.6 12.400l.9-4.400 7.300-7.400 3.600 3.800-7.400 7.200z" fill="#aab7a2"/><path d="M.6 12.400l.9-4.400 3.500 3.600z" fill="#8f9c88"/><path d="M1.500 8l7.300-7.400 1.200 1.300-7.300 7.300z" fill="#bcc8b5"/></svg>
<svg class="abs" style="left:480px;top:422px" width="13" height="12" viewBox="0 0 13 12"><defs><linearGradient id="gx" x1="0" y1="0" x2="0" y2="1"><stop offset="0" stop-color="#f07868"/><stop offset="1" stop-color="#c83434"/></linearGradient></defs><path d="M1.800 1.500l9.400 9M11.200 1.500l-9.400 9" stroke="url(#gx)" stroke-width="2.500" stroke-linecap="round"/></svg>
<svg class="abs" style="left:502px;top:419px" width="16" height="16" viewBox="0 0 16 16"><rect x=".5" y=".5" width="15" height="14.500" rx="1" fill="#aebcd2" stroke="#a2b2ca"/><rect x="3" y="1.500" width="10" height="4.500" fill="#cfe0e4"/><path d="M3.500 3h9M3.500 4.500h9" stroke="#b8d0cc" stroke-width=".8"/><rect x="2.500" y="8.500" width="11" height="6.500" fill="#bcc8da"/><rect x="3.500" y="10" width="3" height="5" fill="#93a4c0"/><text x="7" y="15" font-family="Liberation Sans" font-weight="bold" font-size="7" fill="#7888a6" textLength="8.500" lengthAdjust="spacingAndGlyphs">ок</text></svg>
<div class="sep" style="left:523px;top:419px;height:18px"></div>
<svg class="abs" style="left:532px;top:420px" width="14" height="15" viewBox="0 0 14 15"><defs><linearGradient id="ge" x1="0" y1="0" x2="0" y2="1"><stop offset="0" stop-color="#fbd860"/><stop offset="1" stop-color="#eaa820"/></linearGradient></defs><path d="M.5 6.500l2-1.500h8l2 1.500v7.500h-12z" fill="#f4c030" stroke="#d49a1c" stroke-width=".6"/><rect x="2.500" y=".5" width="7" height="8" fill="#dce6f2" stroke="#8aa0be" stroke-width=".8"/><rect x="3.500" y="2" width="7" height="8" fill="#e8eef6" stroke="#8aa0be" stroke-width=".8"/><path d="M5 3.500h4M5 5.500h4M5 7.500h4" stroke="#7f9cc0" stroke-width=".9"/><path d="M.5 8.500l6 3 6-3v5.500h-12z" fill="url(#ge)" stroke="#d49a1c" stroke-width=".5"/></svg>
<svg class="abs" style="left:548px;top:427px" width="6" height="4"><path d="M0 0h6l-3 3.500z" fill="#2e2000"/></svg>
<div class="sep" style="left:558px;top:419px;height:18px"></div>
<div class="abs" style="left:562px;top:417px;width:95px;height:22px;border:1px solid #c9c1a0;background:#ece8d2;border-radius:2px"></div>
<svg class="abs" style="left:565px;top:420px" width="16" height="16" viewBox="0 0 16 16"><defs><linearGradient id="gf" x1="0" y1="0" x2="1" y2="0"><stop offset="0" stop-color="#f0f0f0"/><stop offset=".5" stop-color="#c4c6ca"/><stop offset="1" stop-color="#8a8e94"/></linearGradient></defs><rect x="1.500" y="4.500" width="10" height="9.500" fill="#fff" stroke="#5a82b4"/><path d="M3 8.500h2.500M3 10.500h2.500M3 12.500h2.500M8.500 10.500h1.500M8.500 12.500h1.500" stroke="#9ab4d0"/><path d="M.5 .5h13l-4.800 5.500v6.500h-3.400v-6.500z" fill="url(#gf)" stroke="#8a9098" stroke-width=".7"/><path d="M13.500 5v8" stroke="#2a4a78" stroke-width="1.200"/><path d="M11.300 11.800h4.400l-2.200 3.700z" fill="#2a4a78"/></svg>
<div class="t" style="left:584px;top:421px">По строке СО</div>
<div class="grid" style="left:19px;top:440px;width:381px;height:122px">
<div class="hd" style="left:0px;top:0px;width:25px;height:21px;"><span style="top:3px;">№</span></div>
<div class="hd" style="left:25px;top:0px;width:112px;height:21px;"><span style="top:3px;letter-spacing:-.12px;">Источник финанси...</span></div>
<div class="hd" style="left:137px;top:0px;width:44px;height:21px;"><span style="top:3px;">ФКР</span></div>
<div class="hd" style="left:181px;top:0px;width:80px;height:21px;"><span style="top:3px;">Код платны...</span></div>
<div class="hd" style="left:261px;top:0px;width:51px;height:21px;"><span style="top:3px;">Специ...</span></div>
<div class="hd" style="left:312px;top:0px;width:67px;height:21px;border-right:none;"><span style="top:3px;">Налог</span></div>
<div class="c r" style="left:0px;top:21px;width:25px;height:19px;background:#7094d2;color:#fff;"><span>1</span></div>
<div class="c" style="left:25px;top:21px;width:112px;height:19px;"><span>Бюджетные средс...</span></div>
<div class="c" style="left:137px;top:21px;width:44px;height:19px;"><span>001/...</span></div>
<div class="c" style="left:181px;top:21px;width:80px;height:19px;"><span></span></div>
<div class="c" style="left:261px;top:21px;width:51px;height:19px;"><span>121</span></div>
<div class="c r" style="left:312px;top:21px;width:67px;height:19px;border-right:none;"><span>-222,06</span></div>
<div class="c r" style="left:0px;top:40px;width:25px;height:19px;"><span>2</span></div>
<div class="c" style="left:25px;top:40px;width:112px;height:19px;"><span style="letter-spacing:-.14px">Средства, получен...</span></div>
<div class="c" style="left:137px;top:40px;width:44px;height:19px;"><span></span></div>
<div class="c" style="left:181px;top:40px;width:80px;height:19px;"><span>001</span></div>
<div class="c" style="left:261px;top:40px;width:51px;height:19px;"><span>121</span></div>
<div class="c r" style="left:312px;top:40px;width:67px;height:19px;border-right:none;"><span>-116,84</span></div>
</div>
<div class="grid" style="left:406px;top:440px;width:386px;height:122px">
<div class="hd" style="left:0px;top:0px;width:25px;height:21px;"><span style="top:3px;">№</span></div>
<div class="hd" style="left:25px;top:0px;width:117px;height:21px;"><span style="top:3px;letter-spacing:-.12px;">Источник финанси...</span></div>
<div class="hd" style="left:142px;top:0px;width:44px;height:21px;"><span style="top:3px;">ФКР</span></div>
<div class="hd" style="left:186px;top:0px;width:83px;height:21px;"><span style="top:3px;">Код платных...</span></div>
<div class="hd" style="left:269px;top:0px;width:52px;height:21px;"><span style="top:3px;">Специ...</span></div>
<div class="hd" style="left:321px;top:0px;width:63px;height:21px;border-right:none;"><span style="top:3px;">Отчисле...</span></div>
<div class="c r" style="left:0px;top:21px;width:25px;height:19px;background:#7094d2;color:#fff;"><span>1</span></div>
<div class="c" style="left:25px;top:21px;width:117px;height:19px;"><span>Бюджетные средст...</span></div>
<div class="c" style="left:142px;top:21px;width:44px;height:19px;"><span>001/...</span></div>
<div class="c" style="left:186px;top:21px;width:83px;height:19px;"><span></span></div>
<div class="c" style="left:269px;top:21px;width:52px;height:19px;"><span>122</span></div>
<div class="c r" style="left:321px;top:21px;width:63px;height:19px;border-right:none;"><span>222,07</span></div>
<div class="c r" style="left:0px;top:40px;width:25px;height:19px;"><span>2</span></div>
<div class="c" style="left:25px;top:40px;width:117px;height:19px;"><span style="letter-spacing:-.14px">Средства, получен...</span></div>
<div class="c" style="left:142px;top:40px;width:44px;height:19px;"><span></span></div>
<div class="c" style="left:186px;top:40px;width:83px;height:19px;"><span>001</span></div>
<div class="c" style="left:269px;top:40px;width:52px;height:19px;"><span>122</span></div>
<div class="c r" style="left:321px;top:40px;width:63px;height:19px;border-right:none;"><span>116,83</span></div>
</div>
<div class="t" style="left:12px;top:600px">Комментарий:</div>
<div class="fld" style="left:100px;top:597px;width:699px"><div class="tx" style="letter-spacing:.03px">Документ создан автоматически сервисной обработкой для корректировки сумм СО и СН на исчисленные ОППВ</div></div>
<div class="abs" style="left:4px;top:624px;width:803px;height:25px;background:#f5f2e0;border-top:1px solid #b9af8a"></div>
<div class="t" style="left:12px;top:631px;color:#14148c;letter-spacing:.09px">Романенко Алексей Дмитриев...</div>
<div class="t" style="left:663px;top:630px;font-weight:bold;font-size:12px">OK</div>
<div class="sep" style="left:687px;top:628px;height:19px"></div>
<div class="t" style="left:695px;top:631px">Записать</div>
<div class="sep" style="left:749px;top:628px;height:19px"></div>
<div class="t" style="left:757px;top:631px;letter-spacing:.08px">Закрыть</div>
<div class="red" style="left:20px;top:212px;width:761px;height:46px"></div>
<div class="red" style="left:17px;top:441px;width:780px;height:69px"></div>
</body></html>
